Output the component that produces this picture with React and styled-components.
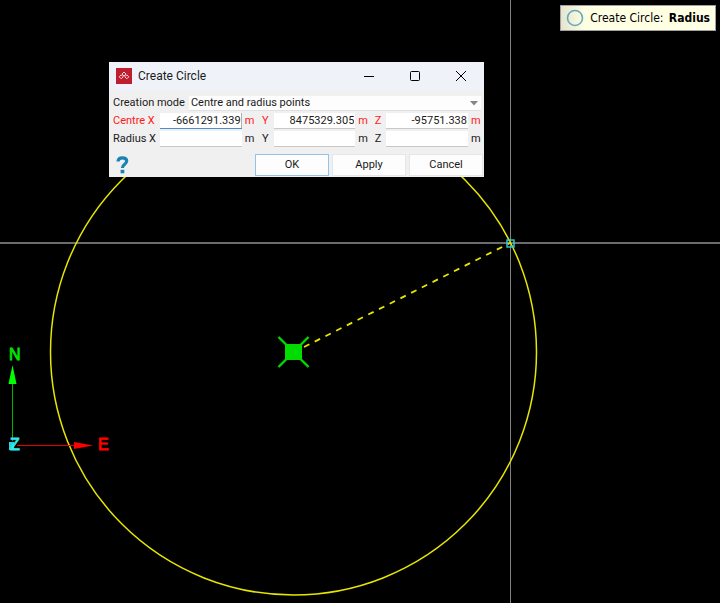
import React, { useState } from 'react';
import styled, { createGlobalStyle, css } from 'styled-components';

const colors = {
  yellow: '#e6e600',
  green: '#00dc00',
  red: '#ff0000',
  cyan: '#2ad4dc',
  required: '#ff1a1a',
  text: '#1a1a1a',
  face: '#f0f0f0',
};

const fonts = {
  ui: 'Roboto, "Noto Sans", sans-serif',
  status: '"DejaVu Sans Condensed", "DejaVu Sans", sans-serif',
  axis: '"Liberation Sans", Arial, sans-serif',
};

const GlobalStyle = createGlobalStyle`
  * {
    box-sizing: border-box;
  }
  body {
    margin: 0;
    background: #000;
  }
`;

const Viewport = styled.main`
  position: relative;
  min-height: 100vh;
  overflow: hidden;
  background: #000;
`;

const Drawing = styled.svg`
  position: absolute;
  inset: 0;
  width: 100%;
  height: 100%;
`;

const AxisLabel = styled.text`
  font-family: ${fonts.axis};
  font-size: 16px;
  fill: ${({ $color }) => $color};
  stroke: ${({ $color }) => $color};
  stroke-width: 0.8;
`;

const Status = styled.div`
  position: absolute;
  top: 5px;
  right: 4px;
  display: flex;
  align-items: center;
  gap: 6px;
  height: 26px;
  padding: 0 5px;
  border: 1px solid #a0a0a0;
  background: linear-gradient(90deg, #e4e4d0, #ffffe4 24px);
  color: #000;
  font-family: ${fonts.status};
  font-size: 12px;
  line-height: 16px;
  white-space: nowrap;
  b {
    margin-left: 2px;
  }
`;

const Dialog = styled.form`
  position: absolute;
  top: 62px;
  left: 109px;
  width: 375px;
  background: ${colors.face};
  color: ${colors.text};
  font-family: ${fonts.ui};
  font-size: 11px;
  line-height: 14px;
`;

const TitleBar = styled.header`
  display: flex;
  align-items: center;
  height: 28px;
  padding-left: 7px;
  background: #eff3f9;
`;

const Title = styled.h1`
  flex: 1;
  margin: 0 0 0 6px;
  font-size: 12px;
  font-weight: 400;
  line-height: 16px;
`;

const WindowButton = styled.button`
  display: flex;
  align-items: center;
  justify-content: center;
  width: 46px;
  height: 28px;
  padding: 0;
  border: 0;
  background: none;
`;

const Body = styled.div`
  display: grid;
  gap: 2px;
  padding: 5px 0 0 4px;
`;

const ModeRow = styled.div`
  display: flex;
  align-items: center;
  height: 16px;
  padding-right: 3px;
  white-space: nowrap;
`;

const SelectBox = styled.div`
  position: relative;
  flex: 1;
  margin-left: 4px;
  svg {
    position: absolute;
    top: 5px;
    right: 3px;
    pointer-events: none;
  }
`;

const Select = styled.select`
  display: block;
  width: 100%;
  height: 15px;
  padding: 0 0 0 2px;
  appearance: none;
  border: 0;
  border-bottom: 1px solid #e0e0e0;
  outline: 0;
  background: #fdfdfd;
  color: inherit;
  font: inherit;
`;

const Row = styled.div`
  display: grid;
  grid-template-columns: 47px 1fr 32px 1fr 31px 1fr 16px;
  align-items: center;
  height: 16px;
  color: ${({ $required }) => ($required ? colors.required : colors.text)};
  white-space: nowrap;
`;

const Between = styled.span`
  display: flex;
  justify-content: space-between;
  padding: 0 5px 0 3px;
`;

const Unit = styled.span`
  padding-left: 3px;
`;

const Input = styled.input`
  width: 100%;
  min-width: 0;
  height: 16px;
  padding: 0 1px;
  border: 0;
  border-bottom: 1px solid #c8c8c8;
  border-radius: 0;
  outline: 0;
  background: #fff;
  color: ${colors.text};
  font: inherit;
  text-align: right;
  ${({ $active }) =>
    $active &&
    css`
      border-bottom-color: #4a90cc;
      box-shadow: inset -1px 0 #b0b0b0;
    `};
`;

const Footer = styled.footer`
  display: flex;
  align-items: center;
  gap: 3px;
  padding: 7px 1px 1px 7px;
`;

const HelpButton = styled.button`
  display: flex;
  margin-right: auto;
  padding: 0;
  border: 0;
  background: none;
`;

const Button = styled.button`
  width: 74px;
  height: 22px;
  padding: 0;
  border: 1px solid ${({ $primary }) => ($primary ? '#90c4ea' : '#e6e6e6')};
  background: #fdfdfd;
  color: ${colors.text};
  font: inherit;
`;

const Scene = () => (
  <Drawing aria-hidden="true">
    <g stroke="#808080" shapeRendering="crispEdges">
      <line x1="0" y1="243" x2="100%" y2="243" stroke="#6c6c6c" strokeWidth="2" />
      <line x1="510.5" y1="0" x2="510.5" y2="100%" />
    </g>
    <circle cx="293.5" cy="352" r="243" fill="none" stroke={colors.yellow} strokeWidth="1.5" />
    <line
      x1="304"
      y1="347"
      x2="510"
      y2="243"
      stroke={colors.yellow}
      strokeWidth="1.8"
      strokeDasharray="6 6"
    />
    <rect x="507" y="240" width="7" height="7" fill="none" stroke={colors.cyan} strokeWidth="1.4" />
    <path d="M278.5 337l30 30M308.5 337l-30 30" stroke={colors.green} strokeWidth="2.4" />
    <rect x="285" y="344" width="17" height="16" fill={colors.green} />
    <path d="M12.5 383v58" stroke="#00b400" />
    <path d="M12.5 365l4 19h-8z" fill="#00ff00" />
    <path d="M17 445.5h58" stroke="#e80000" />
    <path d="M93 445.5l-19-3.5v7z" fill={colors.red} />
    <path d="M9 442h5v8H9z" fill={colors.cyan} />
    <AxisLabel x="9" y="360" $color="#00e600">
      N
    </AxisLabel>
    <AxisLabel x="10" y="450" $color="#30e8f0">
      Z
    </AxisLabel>
    <AxisLabel x="98" y="450" $color={colors.red}>
      E
    </AxisLabel>
  </Drawing>
);

const AppIcon = () => (
  <svg width="16" height="16" viewBox="0 0 16 16" aria-hidden="true">
    <path d="M0 0h16v16H0z" fill="#be1e2d" />
    <path
      d="M8 4l2 2-2 2-2-2zM5.2 6.8l2 2-2 2-2-2zM10.8 6.8l2 2-2 2-2-2z"
      fill="none"
      stroke="#f4d5d8"
      strokeWidth="1"
    />
  </svg>
);

const HelpIcon = () => (
  <svg width="13" height="18" viewBox="0 0 13 18" aria-hidden="true">
    <path
      d="M2 5.5C2.2 2.8 4 1.8 6.3 1.8c2.6 0 4.4 1 4.4 3.3 0 3.4-4.3 3-4.3 7"
      fill="none"
      stroke="#1b82b4"
      strokeWidth="3.2"
    />
    <path d="M4.6 13.8h3.7v3.5H4.6z" fill="#1b82b4" />
  </svg>
);

const CoordinateRow = ({ name, values, required, active }) => {
  const [coords, setCoords] = useState(values);
  const id = axis => `${name}-${axis}`.toLowerCase();
  const field = (axis, i) => (
    <Input
      id={id(axis)}
      value={coords[i]}
      $active={active && i === 0}
      onChange={e => setCoords(coords.map((c, n) => (n === i ? e.target.value : c)))}
    />
  );

  return (
    <Row $required={required}>
      <label htmlFor={id('X')}>{name} X</label>
      {field('X', 0)}
      <Between>
        <span>m</span>
        <label htmlFor={id('Y')}>Y</label>
      </Between>
      {field('Y', 1)}
      <Between>
        <span>m</span>
        <label htmlFor={id('Z')}>Z</label>
      </Between>
      {field('Z', 2)}
      <Unit>m</Unit>
    </Row>
  );
};

const CreateCircleDialog = () => (
  <Dialog onSubmit={e => e.preventDefault()}>
    <TitleBar>
      <AppIcon />
      <Title>Create Circle</Title>
      <WindowButton type="button" aria-label="Minimize">
        <svg width="10" height="10" stroke="#000">
          <path d="M0 5.5h10" />
        </svg>
      </WindowButton>
      <WindowButton type="button" aria-label="Maximize">
        <svg width="10" height="10" fill="none" stroke="#000">
          <rect x="0.5" y="0.5" width="9" height="9" rx="1" />
        </svg>
      </WindowButton>
      <WindowButton type="button" aria-label="Close">
        <svg width="10" height="10" stroke="#000">
          <path d="M0 0l10 10M10 0L0 10" />
        </svg>
      </WindowButton>
    </TitleBar>
    <Body>
      <ModeRow>
        <label htmlFor="mode">Creation mode</label>
        <SelectBox>
          <Select id="mode">
            <option>Centre and radius points</option>
          </Select>
          <svg width="8" height="5" aria-hidden="true">
            <path d="M0 0h8L4 4.5z" fill="#858585" />
          </svg>
        </SelectBox>
      </ModeRow>
      <CoordinateRow
        name="Centre"
        values={['-6661291.339', '8475329.305', '-95751.338']}
        required
        active
      />
      <CoordinateRow name="Radius" values={['', '', '']} />
    </Body>
    <Footer>
      <HelpButton type="button" aria-label="Help">
        <HelpIcon />
      </HelpButton>
      <Button type="submit" $primary>
        OK
      </Button>
      <Button type="button">Apply</Button>
      <Button type="button">Cancel</Button>
    </Footer>
  </Dialog>
);

const App = () => (
  <Viewport>
    <GlobalStyle />
    <Scene />
    <Status role="status">
      <svg width="18" height="18" aria-hidden="true">
        <circle cx="9" cy="9" r="7.5" fill="none" stroke="#62aabd" strokeWidth="1.6" />
      </svg>
      <span>
        Create Circle: <b>Radius</b>
      </span>
    </Status>
    <CreateCircleDialog />
  </Viewport>
);

export default App;
